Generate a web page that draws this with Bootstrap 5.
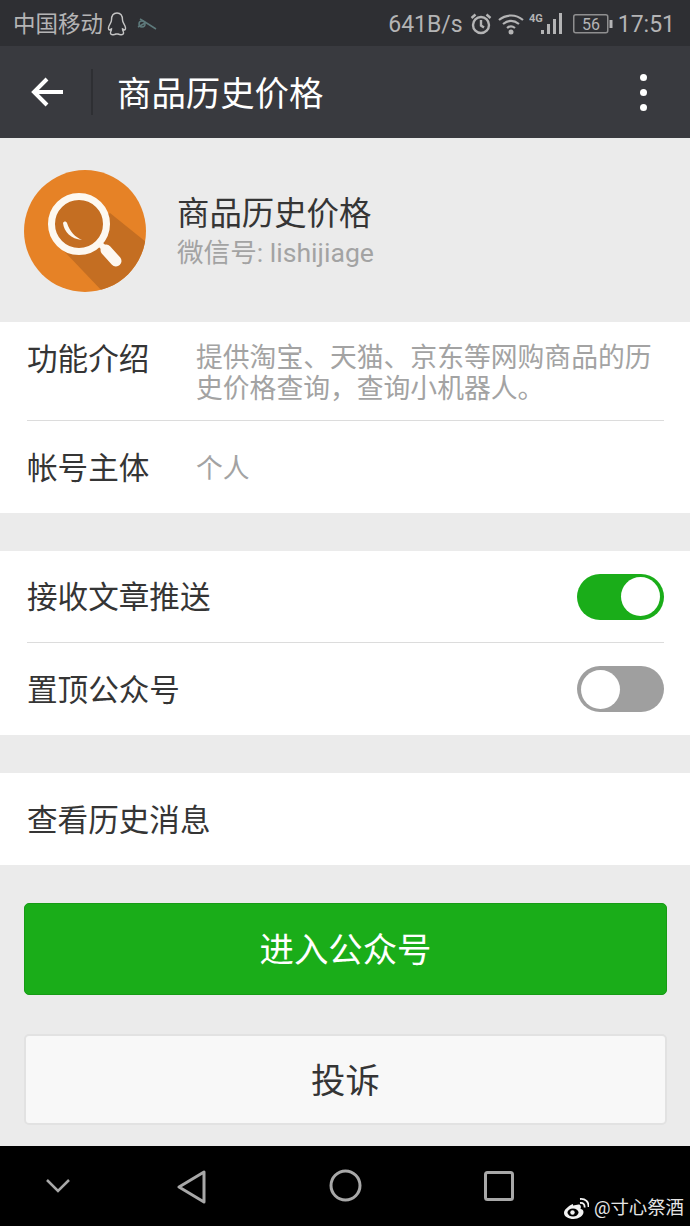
<!DOCTYPE html>
<html lang="zh-CN">
<head>
  <meta charset="UTF-8">
  <meta name="viewport" content="width=device-width, initial-scale=1">
  <title>商品历史价格</title>
  <link href="https://cdn.jsdelivr.net/npm/bootstrap@5.3.2/dist/css/bootstrap.min.css" rel="stylesheet">
  <style>
    html, body { height: 100%; }
    body { background: #ebebeb; font-family: Roboto, "Noto Sans CJK SC", sans-serif; color: #353535; }
    .phone { width: 690px; height: 1226px; overflow: hidden; }
    .status-bar { height: 46px; background: #2e2f33; color: #b4b4b5; font-size: 22.5px; padding: 2px 15px 0 13px; }
    .status-bar svg { display: block; }
    .status-bar span { padding-top: 2px; }
    .speed, .clock { font-size: 23px; }
    .icon-gap-5 { margin-left: 5px; }
    .icon-gap-6 { margin-left: 6px; }
    .icon-gap-7 { margin-left: 7px; }
    .icon-gap-10 { margin-left: 10px; }
    .app-bar { height: 92px; background: #393a3f; color: #fff; }
    .back-btn { width: 93px; height: 46px; border-right: 2px solid #2e2f33; padding-left: 30px; }
    .app-title { font-size: 34.4px; line-height: 1; margin-left: 24px; padding-top: 4px; }
    .more-dots { gap: 8px; margin-right: 43px; }
    .more-dots span { width: 7px; height: 7px; border-radius: 50%; background: #fff; }
    .profile { height: 184px; padding: 2px 0 0 24px; }
    .profile-name { font-size: 32.4px; line-height: 40px; }
    .profile-id { font-size: 26.6px; line-height: 38px; color: #a3a3a3; }
    .profile-text { margin-left: 31px; padding-top: 3px; }
    .block { background: #fff; padding-left: 27px; padding-right: 26px; font-size: 30.6px; line-height: 1; }
    .rowline { border-bottom: 1px solid #dcdcdc; }
    .item-label { width: 169px; flex-shrink: 0; }
    .intro .item-label { padding-top: 2px; }
    .item-desc { font-size: 26.8px; line-height: 31px; color: #a3a3a3; }
    .intro { height: 99px; padding-top: 21px; }
    .item-row { height: 92px; padding-top: 4px; }
    .item-row .toggle { margin-top: -4px; }
    .spacer-38 { height: 38px; }
    .toggle { width: 87px; height: 46px; border-radius: 23px; padding: 3.5px 4px; display: flex; }
    .toggle i { display: block; width: 39px; height: 39px; border-radius: 50%; background: #fff; }
    .toggle-on { background: #1aad19; justify-content: flex-end; }
    .toggle-off { background: #9f9f9f; justify-content: flex-start; }
    .actions { padding: 38px 23px 0 24px; gap: 39px; }
    .wx-btn { height: 92px; font-size: 34.4px; line-height: 1; border-radius: 5px; padding: 6px 0 4px; display: flex; align-items: center; justify-content: center; width: 100%; }
    .wx-green, .wx-green:hover { background: #1aad19; color: #fff; border: 1px solid #179b16; }
    .wx-plain, .wx-plain:hover { background: #f8f8f8; color: #353535; border: 2px solid #e2e2e2; height: 91px; padding: 8px 0 4px; }
    .nav-strip { height: 80px; background: #000; position: absolute; top: 1146px; left: 0; width: 690px; }
    .nav-strip > svg { position: absolute; }
    .watermark { position: absolute; right: 6px; bottom: 4px; color: #e6e6e6; font-size: 18.4px; line-height: 28px; }
    .watermark svg { margin-right: 5px; }
  </style>
</head>
<body>
  <div class="phone position-relative">
    <div class="status-bar d-flex align-items-center justify-content-between">
      <div class="d-flex align-items-center">
        <span>中国移动</span>
        <svg class="ms-1" width="20" height="24" viewBox="0 0 20 24" fill="none" stroke="#c4c4c4" stroke-width="1.4"><path d="M10 1C6 1 4.500 4 4.500 8 4.500 10 3 11.500 2 14 1 16.500 1.500 18 2.500 18L4.500 17C4.500 19 3 20 3.500 21.500 4 23 7 23 9 22H11C13 23 16 23 16.500 21.500 17 20 15.500 19 15.500 17L17.500 18C18.500 18 19 16.500 18 14 17 11.500 15.500 10 15.500 8 15.500 4 14 1 10 1Z"/></svg>
        <svg class="icon-gap-10" width="20" height="14" viewBox="0 0 20 14" fill="none" stroke="#5e7a7c" stroke-width="1.500"><circle cx="5" cy="7" r="3"/><path d="M3 2l5 3 11 7M1 10l7-4"/></svg>
      </div>
      <div class="d-flex align-items-center">
        <span class="speed">641B/s</span>
        <svg class="icon-gap-7" width="22" height="24" viewBox="0 0 22 24" fill="none" stroke="#b4b4b5" stroke-width="2.400"><circle cx="11" cy="13" r="8"/><path d="M11 8v5.500l3 2M1.500 6l4-3.500M20.500 6l-4-3.500"/></svg>
        <svg class="icon-gap-6" width="26" height="22" viewBox="0 0 26 22" fill="none" stroke="#b4b4b5" stroke-width="2.200"><path d="M1 7c7-6 17-6 24 0M5 11c5-4 11-4 16 0M9 15c2.500-2 5.500-2 8 0"/><circle cx="13" cy="19" r="2.500" fill="#b4b4b5" stroke="none"/></svg>
        <svg class="icon-gap-5" width="34" height="24" viewBox="0 0 34 24" fill="#b4b4b5"><text x="0" y="10" font-size="11" font-weight="700" font-family="Roboto, sans-serif">4G</text><rect x="12" y="18" width="3" height="4"/><rect x="18" y="12" width="3" height="10"/><rect x="24" y="7" width="3" height="15"/><rect x="30" y="1" width="3" height="21"/></svg>
        <svg class="icon-gap-10" width="40" height="20" viewBox="0 0 40 20" fill="none"><rect x=".75" y=".75" width="34" height="18" rx="2" stroke="#8f8f90" stroke-width="1.500"/><rect x="36.500" y="6" width="3" height="8" fill="#b4b4b5"/><text x="18" y="15.500" text-anchor="middle" font-size="16" fill="#b4b4b5" font-family="Roboto, sans-serif">56</text></svg>
        <span class="clock icon-gap-5">17:51</span>
      </div>
    </div>

    <div class="app-bar d-flex align-items-center">
      <div class="back-btn d-flex align-items-center">
        <svg width="34" height="32" viewBox="0 0 34 32" fill="none" stroke="#fff" stroke-width="4"><path d="M33 16H4M17 3L4 16l13 13"/></svg>
      </div>
      <div class="app-title flex-grow-1">商品历史价格</div>
      <div class="more-dots d-flex flex-column"><span></span><span></span><span></span></div>
    </div>

    <div class="profile d-flex align-items-center">
      <svg width="122" height="122" viewBox="0 0 122 122">
        <defs><clipPath id="logoClip"><circle cx="61" cy="61" r="61"/></clipPath></defs>
        <circle cx="61" cy="61" r="61" fill="#e68226"/>
        <path d="M39 80L79 122H122V72L86 43z" fill="#c46e22" clip-path="url(#logoClip)"/>
        <circle cx="55" cy="54" r="27.500" fill="#c46e22" stroke="#fdf8f0" stroke-width="7"/>
        <path d="M76 74l6 6" stroke="#fdf8f0" stroke-width="6"/>
        <path d="M82 80l10 11" stroke="#fdf8f0" stroke-width="11" stroke-linecap="round"/>
        <path d="M39 53c1 9 8 16 19 17-7-3-12-8-15-17-1-2-3-2-4 0z" fill="#fdf8f0"/>
      </svg>
      <div class="profile-text">
        <div class="profile-name">商品历史价格</div>
        <div class="profile-id">微信号: lishijiage</div>
      </div>
    </div>

    <div class="block">
      <div class="intro d-flex rowline">
        <div class="item-label">功能介绍</div>
        <div class="item-desc">提供淘宝、天猫、京东等网购商品的历史价格查询，查询小机器人。</div>
      </div>
      <div class="item-row d-flex align-items-center">
        <div class="item-label">帐号主体</div>
        <div class="item-desc">个人</div>
      </div>
    </div>
    <div class="spacer-38"></div>

    <div class="block">
      <div class="item-row d-flex align-items-center justify-content-between rowline">
        <span>接收文章推送</span>
        <span class="toggle toggle-on"><i></i></span>
      </div>
      <div class="item-row d-flex align-items-center justify-content-between">
        <span>置顶公众号</span>
        <span class="toggle toggle-off"><i></i></span>
      </div>
    </div>
    <div class="spacer-38"></div>

    <div class="block">
      <div class="item-row d-flex align-items-center">查看历史消息</div>
    </div>

    <div class="actions d-flex flex-column">
      <button type="button" class="btn wx-btn wx-green">进入公众号</button>
      <button type="button" class="btn wx-btn wx-plain">投诉</button>
    </div>

    <div class="nav-strip">
      <svg style="left:46px;top:33px" width="24" height="14" viewBox="0 0 24 14" fill="none" stroke="#a8a8a8" stroke-width="2.500"><path d="M1 1l11 11L23 1"/></svg>
      <svg style="left:177px;top:24px" width="30" height="34" viewBox="0 0 30 34" fill="none" stroke="#a8a8a8" stroke-width="3" stroke-linejoin="round"><path d="M27 2v30L2 17z"/></svg>
      <svg style="left:329px;top:23px" width="33" height="33" viewBox="0 0 33 33" fill="none" stroke="#a8a8a8" stroke-width="3"><circle cx="16.500" cy="16.500" r="14.500"/></svg>
      <svg style="left:484px;top:25px" width="30" height="30" viewBox="0 0 30 30" fill="none" stroke="#a8a8a8" stroke-width="3"><rect x="1.500" y="1.500" width="27" height="27" rx="2"/></svg>
      <div class="watermark d-flex align-items-center">
        <svg width="25" height="21" viewBox="0 0 25 21"><path d="M9 6C4 8 0 12 0 15c0 3.500 4.500 6 9.500 6s10-3 10-7c0-2-1.500-3-3-3 1-2.500 0-4.500-2-4.500-1.500 0-3.500 1-5.500 1z" fill="#f2f2f2"/><ellipse cx="9" cy="14.500" rx="5.500" ry="4" fill="#000"/><circle cx="8.500" cy="14.500" r="2.200" fill="#f2f2f2"/><path d="M16 5c3-.5 5 1.500 4.500 4.500M16 1c5.500-.5 9 3 8.500 8" fill="none" stroke="#f2f2f2" stroke-width="1.800"/></svg>
        <span>@寸心祭酒</span>
      </div>
    </div>
  </div>
  <script src="https://cdn.jsdelivr.net/npm/bootstrap@5.3.2/dist/js/bootstrap.bundle.min.js"></script>
</body>
</html>
